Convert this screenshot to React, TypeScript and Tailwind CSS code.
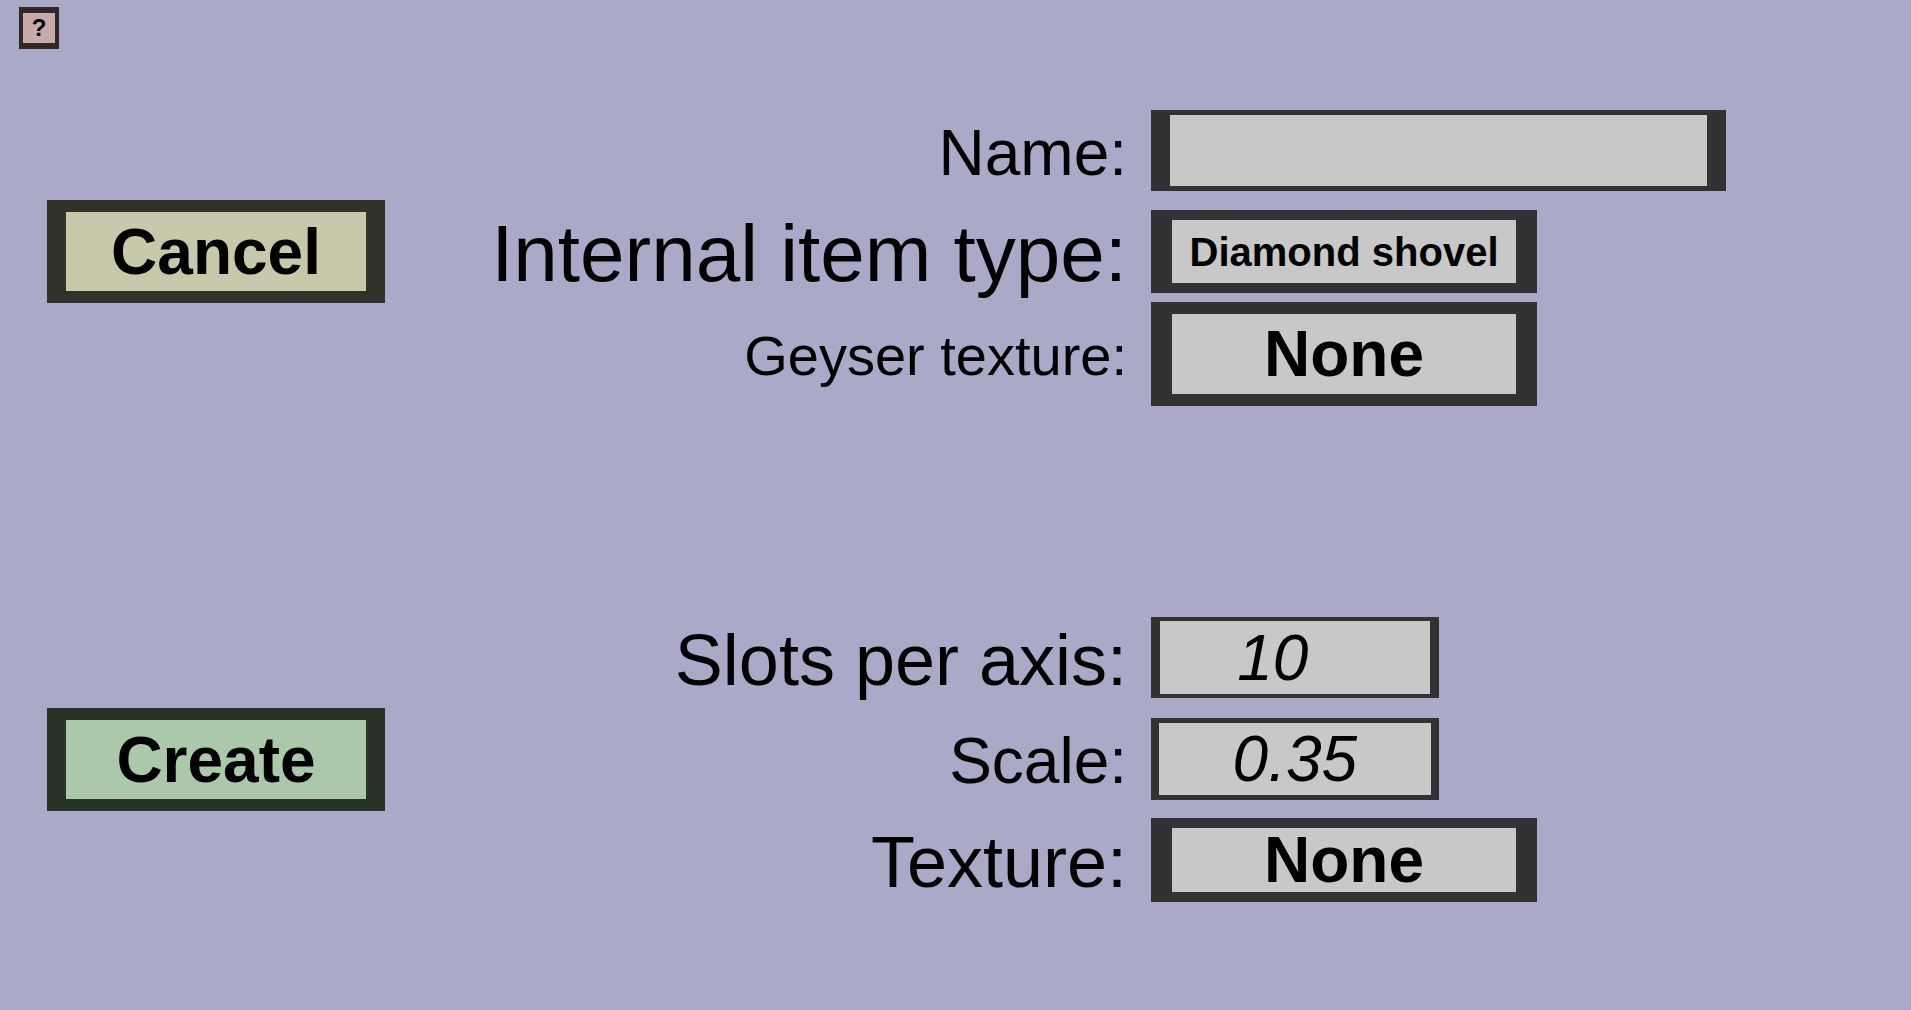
import React, { useState } from "react";

type RowProps = {
  id: string;
  label: string;
  labelClass: string;
  children: React.ReactNode;
};

function Row({ id, label, labelClass, children }: RowProps) {
  return (
    <div className="grid min-h-[101px] grid-cols-[742fr_757fr] items-center gap-x-6 pr-[3px]">
      <label htmlFor={id} className={`pt-1 text-right leading-none whitespace-nowrap ${labelClass}`}>
        {label}
      </label>
      <div className="flex">{children}</div>
    </div>
  );
}

const field = "border-[#323232] bg-[#c8c8c8] text-center leading-none text-black outline-none";

export default function App() {
  const [name, setName] = useState("");
  const [slots, setSlots] = useState("10");
  const [scale, setScale] = useState("0.35");

  return (
    <div className="min-h-screen bg-[#aaaac8] font-['Liberation_Sans',Arial,sans-serif] text-black">
      <header className="h-[100px] px-[19px] pt-[7px]">
        <button
          type="button"
          aria-label="Help"
          className="flex h-[42px] w-10 items-center justify-center border-x-4 border-y-6 border-[#322828] bg-[#c8aaaa] text-2xl leading-none font-bold"
        >
          ?
        </button>
      </header>

      <main className="grid grid-cols-[385fr_1526fr]">
        <div className="flex flex-col gap-[405px] pt-[100px] pl-[47px]">
          <button
            type="button"
            className="h-[103px] border-x-[19px] border-y-12 border-[#323228] bg-[#c8c8aa] text-[64px] leading-none font-bold"
          >
            Cancel
          </button>
          <button
            type="button"
            className="h-[103px] border-x-[19px] border-y-12 border-[#283228] bg-[#aac8aa] text-[64px] leading-none font-bold"
          >
            Create
          </button>
        </div>

        <form className="flex flex-col gap-[201px]" onSubmit={(e) => e.preventDefault()}>
          <div>
            <Row id="name" label="Name:" labelClass="text-[64px]">
              <input
                id="name"
                type="text"
                value={name}
                onChange={(e) => setName(e.target.value)}
                className={`h-[81px] w-[76%] border-x-[19px] border-y-5 text-5xl ${field}`}
              />
            </Row>
            <Row id="item-type" label="Internal item type:" labelClass="text-[80px]">
              <button
                id="item-type"
                type="button"
                className={`h-[83px] w-[51%] border-x-[21px] border-y-10 text-[40px] font-bold whitespace-nowrap ${field}`}
              >
                Diamond shovel
              </button>
            </Row>
            <Row id="geyser" label="Geyser texture:" labelClass="text-[56px]">
              <button
                id="geyser"
                type="button"
                className={`h-[104px] w-[51%] border-x-[21px] border-y-12 text-[64px] font-bold ${field}`}
              >
                None
              </button>
            </Row>
          </div>

          <div>
            <Row id="slots" label="Slots per axis:" labelClass="text-[72px]">
              <input
                id="slots"
                type="text"
                inputMode="numeric"
                value={slots}
                onChange={(e) => setSlots(e.target.value)}
                className={`h-[81px] w-[38%] border-x-9 border-y-4 pr-11 text-[64px] italic ${field}`}
              />
            </Row>
            <Row id="scale" label="Scale:" labelClass="text-[64px]">
              <input
                id="scale"
                type="text"
                inputMode="decimal"
                value={scale}
                onChange={(e) => setScale(e.target.value)}
                className={`h-[82px] w-[38%] border-x-8 border-y-5 text-[64px] italic ${field}`}
              />
            </Row>
            <Row id="texture" label="Texture:" labelClass="text-[72px]">
              <button
                id="texture"
                type="button"
                className={`h-[84px] w-[51%] border-x-[21px] border-y-10 text-[64px] font-bold ${field}`}
              >
                None
              </button>
            </Row>
          </div>
        </form>
      </main>
    </div>
  );
}
